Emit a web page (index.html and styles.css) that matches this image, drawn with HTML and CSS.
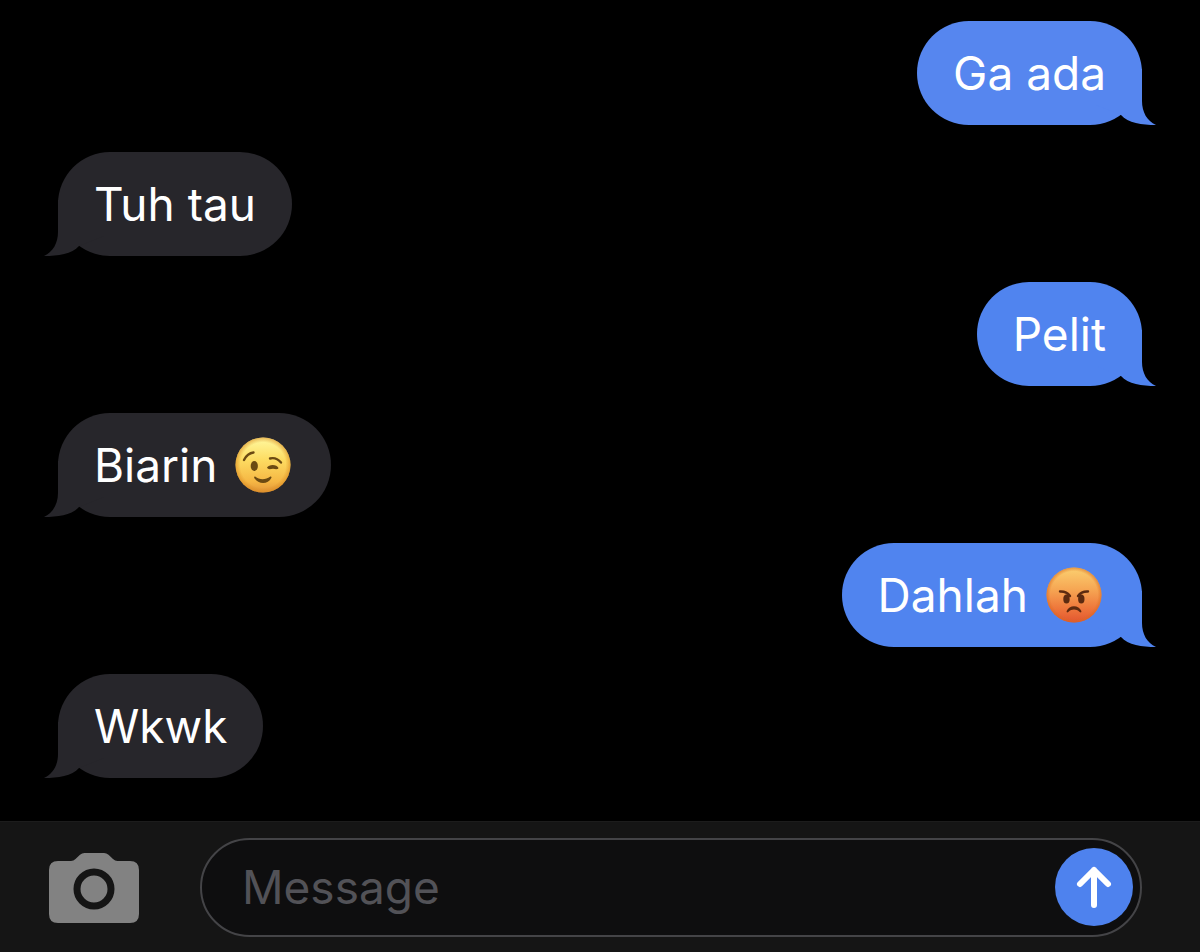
FILE: index.html
```html
<!DOCTYPE html>
<html lang="id">
<head>
    <meta charset="UTF-8">
    <meta name="viewport" content="width=device-width, initial-scale=1.0">
    <title>Messages</title>
    <link rel="stylesheet" href="styles.css">
</head>
<body>
    <!-- Shared shapes -->
    <svg class="shapes" aria-hidden="true">
        <symbol id="tail" viewBox="0 0 60 56">
            <path d="M0 0H46V32C46 43 51 52 60 56C46 56 32 54 25 46L0 36Z"/>
        </symbol>
    </svg>

    <main class="thread">
        <div class="bubble sent">Ga ada<svg class="tail" aria-hidden="true"><use href="#tail"/></svg></div>
        <div class="bubble received">Tuh tau<svg class="tail" aria-hidden="true"><use href="#tail"/></svg></div>
        <div class="bubble sent">Pelit<svg class="tail" aria-hidden="true"><use href="#tail"/></svg></div>
        <div class="bubble received">
            Biarin
            <svg class="emoji" viewBox="0 0 56 56" role="img" aria-label="Winking face">
                <defs>
                    <linearGradient id="wink-face" x1="0" y1="0" x2="0" y2="1">
                        <stop offset="0" stop-color="#fff9a0"/>
                        <stop offset="0.4" stop-color="#fddc62"/>
                        <stop offset="0.8" stop-color="#f6b744"/>
                        <stop offset="1" stop-color="#e2963a"/>
                    </linearGradient>
                    <radialGradient id="wink-edge">
                        <stop offset="0.82" stop-color="#d98a20" stop-opacity="0"/>
                        <stop offset="1" stop-color="#d98a20" stop-opacity="0.6"/>
                    </radialGradient>
                </defs>
                <circle cx="28" cy="28" r="27.500" fill="url(#wink-face)"/>
                <circle cx="28" cy="28" r="27.500" fill="url(#wink-edge)"/>
                <ellipse cx="19.300" cy="29" rx="3.600" ry="5" fill="#6b4a12"/>
                <g fill="none" stroke="#6b4a12" stroke-width="2.400" stroke-linecap="round">
                    <path d="M9 23C11 19 14 16 18.500 15.500"/>
                    <path d="M35 21.500C39 20.500 43 22 46 25.500"/>
                </g>
                <path d="M32 30.500C34 27 42 27 43.500 31C43 32.500 41 32.300 38 31.800C35.500 32 33 33 32 30.500Z" fill="#6b4a12"/>
                <path d="M20.500 39.700C24 43 31 43 35 39.700C36 39 37 40 36.300 41C33 47.800 23.500 47.800 19.300 41C18.700 40 19.500 39 20.500 39.700Z" fill="#6b4a12"/>
            </svg>
            <svg class="tail" aria-hidden="true"><use href="#tail"/></svg>
        </div>
        <div class="bubble sent">
            Dahlah
            <svg class="emoji" viewBox="0 0 56 56" role="img" aria-label="Angry face">
                <defs>
                    <linearGradient id="angry-face" x1="0" y1="0" x2="0" y2="1">
                        <stop offset="0" stop-color="#fbd070"/>
                        <stop offset="0.4" stop-color="#f6a653"/>
                        <stop offset="0.75" stop-color="#ee763b"/>
                        <stop offset="1" stop-color="#e25530"/>
                    </linearGradient>
                    <radialGradient id="angry-edge">
                        <stop offset="0.86" stop-color="#d96a20" stop-opacity="0"/>
                        <stop offset="1" stop-color="#d96a20" stop-opacity="0.6"/>
                    </radialGradient>
                </defs>
                <circle cx="28" cy="28" r="27.500" fill="url(#angry-face)"/>
                <circle cx="28" cy="28" r="27.500" fill="url(#angry-edge)"/>
                <g fill="#5c2a10">
                    <ellipse cx="20.500" cy="32" rx="3.200" ry="4.600"/>
                    <ellipse cx="35.300" cy="32" rx="3.200" ry="4.600"/>
                </g>
                <g fill="none" stroke="#5c2a10" stroke-width="2.400" stroke-linecap="round">
                    <path d="M14 24.500C17.500 24.300 21.500 25.500 24 29"/>
                    <path d="M42 24.500C38.500 24.300 34.500 25.500 32 29"/>
                </g>
                <path d="M20.700 44C23 37.500 33 37.500 35.300 44C35.700 45.500 34.700 45.700 33.700 45C30 41.800 26 41.800 22.300 45C21.300 45.700 20.300 45.500 20.700 44Z" fill="#5c2a10"/>
            </svg>
            <svg class="tail" aria-hidden="true"><use href="#tail"/></svg>
        </div>
        <div class="bubble received">Wkwk<svg class="tail" aria-hidden="true"><use href="#tail"/></svg></div>
    </main>

    <form class="composer">
        <button type="button" class="camera" aria-label="Camera">
            <svg viewBox="0 0 90 70">
                <path d="M9 8H22Q24.500 8 26.500 6L31 1.800Q33 0 35.500 0H55Q57.500 0 59.500 1.800L64 6Q66 8 68.500 8H81Q90 8 90 17V61Q90 70 81 70H9Q0 70 0 61V17Q0 8 9 8Z" fill="#828282"/>
                <circle cx="45" cy="36" r="17" fill="none" stroke="#151515" stroke-width="7"/>
            </svg>
        </button>
        <div class="field">
            <input type="text" id="message" placeholder="Message" aria-label="Message">
            <button type="submit" class="send" aria-label="Send">
                <svg viewBox="0 0 78 78" fill="none" stroke="#fff" stroke-width="6" stroke-linecap="round" stroke-linejoin="round">
                    <path d="M39 57V22M25 36L39 22L53 36"/>
                </svg>
            </button>
        </div>
    </form>
</body>
</html>
```

FILE: styles.css
```css
* {
    box-sizing: border-box;
}
body {
    margin: 0;
    min-height: 100vh;
    display: flex;
    flex-direction: column;
    background-color: #000;
    color: #fff;
    font-family: Inter, "Liberation Sans", sans-serif;
    font-size: 46px;
    line-height: 60px;
}
.shapes {
    display: none;
}
.thread {
    flex: 1;
    display: flex;
    flex-direction: column;
    padding: 21px 58px 43px;
}
.bubble {
    position: relative;
    isolation: isolate; /* keeps the tail under the text */
    display: flex;
    align-items: center;
    gap: 18px;
    max-width: 75%;
    padding: 22px 36px;
    border-radius: 52px;
}
.sent {
    align-self: flex-end;
    background-color: #5686ef;
    color: #fff;
}
.received {
    align-self: flex-start;
    margin: 27px 0 26px;
    background-color: #27262b;
}
.sent:nth-child(n+3) {
    background-color: #5084ef;
}
.received:last-child {
    margin-bottom: 0;
}
.emoji {
    width: 56px;
    height: 56px;
    margin-right: 4px;
    flex-shrink: 0;
}
/* Tail hangs over the bottom corner of the bubble */
.tail {
    position: absolute;
    z-index: -1;
    right: -14px;
    bottom: 0;
    width: 60px;
    height: 56px;
    fill: #5686ef;
}
.sent:nth-child(n+3) .tail {
    fill: #5084ef;
}
.received .tail {
    right: auto;
    left: -14px;
    fill: #27262b;
    transform: scaleX(-1);
}
.composer {
    display: flex;
    align-items: center;
    gap: 61px;
    padding: 16px 58px 15px 49px;
    border-top: 1px solid #1c1c1c;
    background-color: #151515;
}
button {
    padding: 0;
    border: none;
    background: none;
    cursor: pointer;
}
button svg {
    display: block;
    width: 100%;
    height: 100%;
}
.camera {
    width: 90px;
    height: 70px;
    flex-shrink: 0;
}
.field {
    flex: 1;
    display: flex;
    align-items: center;
    min-width: 0;
    height: 99px;
    padding: 0 7px 2px 40px;
    border: 2px solid #444447;
    border-radius: 50px;
    background-color: #0e0e0f;
}
.field input {
    flex: 1;
    min-width: 0;
    padding: 0;
    border: none;
    outline: none;
    background: none;
    color: #fff;
    font: inherit;
}
.field input::placeholder {
    color: #525257;
    opacity: 1;
}
.send {
    width: 78px;
    height: 78px;
    flex-shrink: 0;
    border-radius: 50%;
    background-color: #4e82ee;
}
```
